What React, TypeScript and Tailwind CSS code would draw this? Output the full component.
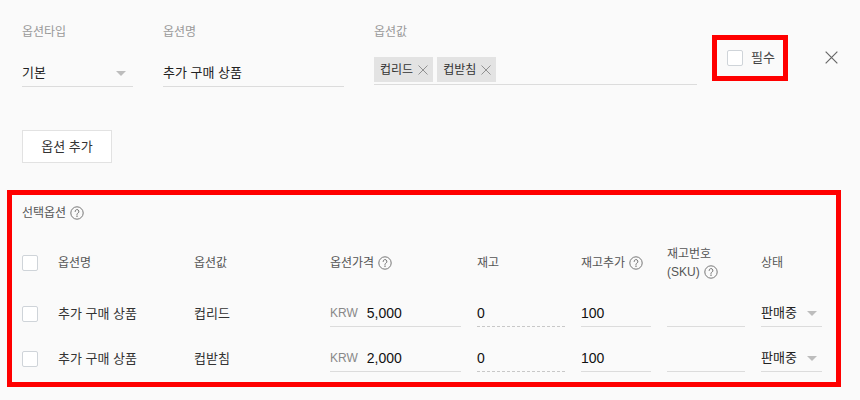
import React from 'react';

const font = "font-['Liberation_Sans','Noto_Sans_CJK_KR',sans-serif]";

function Help() {
  return (
    <svg width="14" height="14" viewBox="0 0 14 14" fill="none" className="inline-block shrink-0">
      <circle cx="7" cy="7" r="6.2" stroke="#777" strokeWidth="1" />
      <path d="M5.1 5.5a1.9 1.9 0 1 1 2.7 1.7c-.5.3-.8.6-.8 1.2v.7" stroke="#777" strokeWidth="1" strokeLinecap="round" />
      <circle cx="7" cy="10.4" r="0.65" fill="#777" />
    </svg>
  );
}

function Caret() {
  return (
    <svg width="10" height="5" viewBox="0 0 10 5" className="shrink-0">
      <path d="M0 0h10L5 5z" fill="#bdbdbd" />
    </svg>
  );
}

function XIcon({ size = 10, color = '#888' }: { size?: number; color?: string }) {
  return (
    <svg width={size} height={size} viewBox="0 0 10 10" className="shrink-0">
      <path d="M0.5 0.5l9 9M9.5 0.5l-9 9" stroke={color} strokeWidth="0.9" />
    </svg>
  );
}

function Box() {
  return <span className="block h-4 w-4 shrink-0 rounded-[2px] border border-[#cfd4d9] bg-white" />;
}

function Tag({ label }: { label: string }) {
  return (
    <span className="flex h-[25px] items-center gap-[5px] bg-[#e3e3e3] pl-[6px] pr-[5px] text-[12px] text-[#333]">
      {label}
      <XIcon />
    </span>
  );
}

const rows = [
  { name: '추가 구매 상품', value: '컵리드', price: '5,000' },
  { name: '추가 구매 상품', value: '컵받침', price: '2,000' },
];

const grid = 'grid grid-cols-[20px_120px_120px_131px_88px_70px_78px_61px] gap-x-4';

export default function App() {
  return (
    <div className={`${font} min-h-[400px] bg-[#fafafa] px-[22px] pt-[23px] text-[13px] text-[#222]`}>
      <div className="flex items-start">
        <div className="w-[111px]">
          <div className="h-[18px] text-[12px] leading-[18px] text-[#999]">옵션타입</div>
          <div className="mt-[15px] flex h-[31px] items-center justify-between border-b border-[#dcdcdc] pt-[4px] pr-[7px]">
            <span>기본</span>
            <Caret />
          </div>
        </div>
        <div className="ml-[30px] w-[181px]">
          <div className="h-[18px] text-[12px] leading-[18px] text-[#999]">옵션명</div>
          <div className="mt-[15px] flex h-[31px] items-center border-b border-[#dcdcdc] pt-[4px]">추가 구매 상품</div>
        </div>
        <div className="ml-[30px] w-[323px]">
          <div className="h-[18px] text-[12px] leading-[18px] text-[#999]">옵션값</div>
          <div className="mt-[15px] flex h-[29px] items-start gap-1 border-b border-[#dcdcdc] pt-[1px]">
            <Tag label="컵리드" />
            <Tag label="컵받침" />
          </div>
        </div>
        <div className="ml-[15px] mt-[12px] flex items-center gap-2 border-[5px] border-[#ff0000] py-[10px] pl-[10px] pr-[8px]">
          <Box />
          <span className="text-[13px] leading-4 text-[#444]">필수</span>
        </div>
        <div className="ml-auto mt-[28px]">
          <XIcon size={13} color="#666" />
        </div>
      </div>

      <button className="mt-[43px] h-[33px] w-[90px] border border-[#e2e2e2] bg-white text-[13px] text-[#333]">
        옵션 추가
      </button>

      <div className="-ml-[15px] -mr-[3px] mt-[27px] border-[5px] border-[#ff0000] pb-[10px] pl-[10px] pr-[8px] pt-[9px]">
        <div className="flex h-[18px] items-center gap-1 text-[12px] text-[#555]">
          선택옵션 <Help />
        </div>

        <div className={`${grid} mt-[23px] h-[36px] items-center text-[12px] leading-[18px] text-[#555]`}>
          <Box />
          <span>옵션명</span>
          <span>옵션값</span>
          <span className="flex items-center gap-1">옵션가격 <Help /></span>
          <span>재고</span>
          <span className="flex items-center gap-1">재고추가 <Help /></span>
          <span>
            재고번호
            <span className="flex items-center gap-1">(SKU) <Help /></span>
          </span>
          <span>상태</span>
        </div>

        {rows.map((r, i) => (
          <div key={i} className={`${grid} items-center text-[#333] ${i === 0 ? 'mt-[15px]' : 'mt-[14px]'}`}>
            <div className="pt-[4px]"><Box /></div>
            <span className="pt-[4px]">{r.name}</span>
            <span className="pt-[4px]">{r.value}</span>
            <div className="flex h-[31px] items-center gap-[9px] border-b border-[#dcdcdc] pt-[4px]">
              <span className="text-[12px] text-[#888]">KRW</span>
              <span className="text-[14px] text-[#111]">{r.price}</span>
            </div>
            <div className="flex h-[31px] items-center border-b border-dashed border-[#c8c8c8] pt-[4px] text-[14px] text-[#111]">0</div>
            <div className="flex h-[31px] items-center border-b border-[#dcdcdc] pt-[4px] text-[14px] text-[#111]">100</div>
            <div className="h-[31px] border-b border-[#dcdcdc]" />
            <div className="flex h-[31px] items-center justify-between border-b border-[#dcdcdc] pr-[5px] pt-[4px] text-[#222]">
              <span>판매중</span>
              <Caret />
            </div>
          </div>
        ))}
      </div>
    </div>
  );
}
